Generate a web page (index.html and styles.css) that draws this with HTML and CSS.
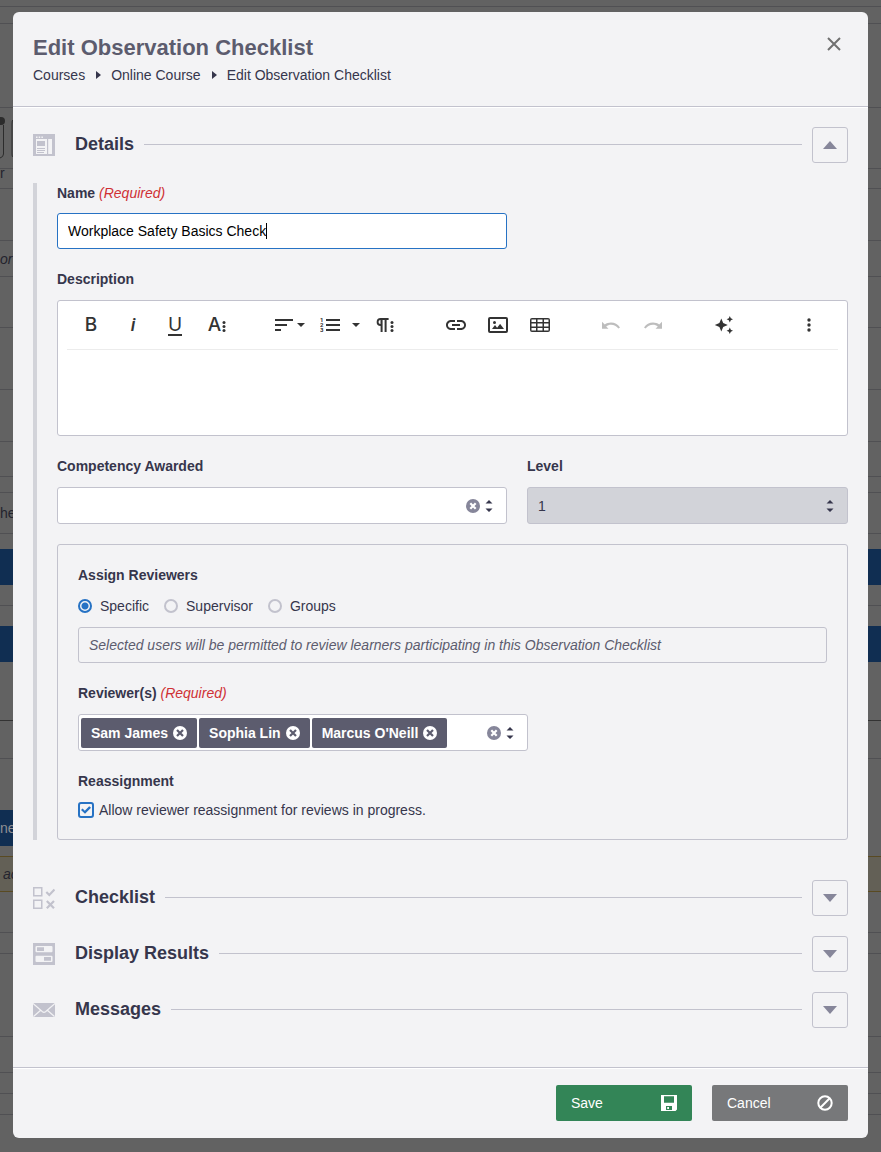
FILE: index.html
```html
<!DOCTYPE html>
<html lang="en">
<head>
  <meta charset="UTF-8">
  <meta name="viewport" content="width=device-width, initial-scale=1.0">
  <title>Edit Observation Checklist</title>
  <link rel="stylesheet" href="styles.css">
</head>
<body>
  <!-- Page behind the dialog -->
  <div class="page" aria-hidden="true">
    <div></div>
    <div></div>
    <div></div>
    <div>
      <svg width="13" height="44" viewBox="0 0 13 44" fill="none" stroke="#2c2c2c"><circle cx="1" cy="5" r="4" fill="#2c2c2c" stroke="none"/><path d="M3.500 9v29q0 3-3.500 4M13 4q-1 0-1 4v30q0 3 1 3"/></svg>
    </div>
    <div class="page-cut">r</div>
    <div></div>
    <div class="page-note">or</div>
    <div></div>
    <div></div>
    <div></div>
    <div></div>
    <div></div>
    <div>he</div>
    <div class="plain"></div>
    <div class="bar"></div>
    <div></div>
    <div class="plain"></div>
    <div class="bar"></div>
    <div class="strong"></div>
    <div></div>
    <div class="plain"></div>
    <div class="bar bar-short">ne</div>
    <div class="warn-line"></div>
    <div class="warn">ac</div>
    <div></div>
    <div></div>
    <div></div>
    <div></div>
    <div></div>
    <div></div>
    <div class="plain"></div>
  </div>

  <div class="overlay">
    <form class="modal" role="dialog" aria-labelledby="modal-title">
      <header class="modal-header">
        <div>
          <h1 id="modal-title">Edit Observation Checklist</h1>
          <nav class="breadcrumb">
            <a href="#">Courses</a>
            <a href="#">Online Course</a>
            <a href="#">Edit Observation Checklist</a>
          </nav>
        </div>
        <button type="button" class="close" aria-label="Close">
          <svg width="14" height="14" viewBox="0 0 14 14"><path d="M1 1l12 12M13 1L1 13" fill="none" stroke="#707070" stroke-width="2"/></svg>
        </button>
      </header>

      <main class="modal-body">
        <section>
          <div class="section-head">
            <svg class="section-icon" width="22" height="22" viewBox="0 0 22 22">
              <path fill="#c2c2cd" d="M0 0h22v22H0z"/>
              <path fill="#f3f3f5" d="M3 2.500h1.500V4H3zM5.700 2.500h1.500V4H5.700zM8.400 2.500h1.500V4H8.400zM3 5h11v15H3zM15.200 5H19v15h-3.800z"/>
              <path fill="#c2c2cd" d="M4 7h8v5H4zM4 14h8v1H4zM4 16h8v1H4zM4 18h7v1H4z"/>
            </svg>
            <h2>Details</h2>
            <hr>
            <button type="button" class="toggle" aria-label="Collapse Details" aria-expanded="true">
              <svg width="14" height="8" viewBox="0 0 14 8"><path d="M7 0l7 8H0z" fill="#86869a"/></svg>
            </button>
          </div>

          <div class="section-body">
            <div class="field field-name">
              <label for="name">Name <em>(Required)</em></label>
              <div class="text-box">
                <input type="text" id="name" value="Workplace Safety Basics Check">
                <span class="caret"></span>
              </div>
            </div>

            <div class="field">
              <label for="description">Description</label>
              <div class="editor">
                <div class="toolbar">
                  <div class="tool-group">
                    <button type="button" class="letter" aria-label="Bold"><b>B</b></button>
                    <button type="button" class="letter" aria-label="Italic"><i>i</i></button>
                    <button type="button" class="letter" aria-label="Underline"><u>U</u></button>
                    <button type="button" class="letter" aria-label="More text">A
                      <svg width="4" height="24" viewBox="0 0 4 24"><circle cx="2" cy="9.500" r="1.500"/><circle cx="2" cy="13.500" r="1.500"/><circle cx="2" cy="17.500" r="1.500"/></svg>
                    </button>
                  </div>
                  <div class="tool-group">
                    <button type="button" class="tool-align" aria-label="Align">
                      <svg width="32" height="24" viewBox="0 0 32 24"><path d="M2 6h18v2H2zM2 11h12v2H2zM2 16h6v2H2zM24 10h8l-4 4z"/></svg>
                    </button>
                    <button type="button" class="tool-list" aria-label="Ordered list">
                      <svg width="42" height="24" viewBox="0 0 42 24">
                        <path d="M6 6h14v2H6zM6 11h14v2H6zM6 16h14v2H6zM32 10h8l-4 4z"/>
                        <text x="0" y="9">1</text><text x="0" y="14">2</text><text x="0" y="19">3</text>
                      </svg>
                    </button>
                    <button type="button" aria-label="More paragraph">
                      <svg width="24" height="24" viewBox="0 0 24 24">
                        <path d="M7.700 5a4 4 0 0 0-.1 8v6h2V7h2v12h2V7h2V5zM5.500 9a2 2 0 0 1 2-2v4a2 2 0 0 1-2-2z"/>
                        <circle cx="19" cy="9.500" r="1.500"/><circle cx="19" cy="13.500" r="1.500"/><circle cx="19" cy="17.500" r="1.500"/>
                      </svg>
                    </button>
                  </div>
                  <div class="tool-group">
                    <button type="button" aria-label="Insert link">
                      <svg width="24" height="24" viewBox="0 0 24 24"><path d="M3.900 12c0-1.710 1.390-3.100 3.100-3.100h4V7H7c-2.760 0-5 2.240-5 5s2.240 5 5 5h4v-1.900H7c-1.710 0-3.100-1.390-3.100-3.100zM8 13h8v-2H8v2zm9-6h-4v1.900h4c1.710 0 3.100 1.390 3.100 3.100s-1.390 3.100-3.100 3.100h-4V17h4c2.760 0 5-2.240 5-5s-2.240-5-5-5z"/></svg>
                    </button>
                    <button type="button" aria-label="Insert image">
                      <svg width="24" height="24" viewBox="0 0 24 24"><path d="M14.200 11l3.800 5H6l3-3.900 2.100 2.700L14 11zM8.500 11a1.500 1.500 0 1 0 0-3 1.500 1.500 0 0 0 0 3zM22 6v12a2 2 0 0 1-2 2H4a2 2 0 0 1-2-2V6a2 2 0 0 1 2-2h16a2 2 0 0 1 2 2zm-2 0H4v12h16z"/></svg>
                    </button>
                    <button type="button" aria-label="Insert table">
                      <svg width="24" height="24" viewBox="0 0 24 24"><path fill-rule="evenodd" d="M4 5h16a2 2 0 0 1 2 2v10a2 2 0 0 1-2 2H4a2 2 0 0 1-2-2V7a2 2 0 0 1 2-2zM3.500 6.500V9H8V6.500zM9.500 6.500V9h5V6.500zM16 6.500V9h4.500V6.500zM3.500 10.500v3H8v-3zM9.500 10.500v3h5v-3zM16 10.500v3h4.500v-3zM3.500 15v2.500H8V15zM9.500 15v2.500h5V15zM16 15v2.500h4.500V15z"/></svg>
                    </button>
                  </div>
                  <div class="tool-group">
                    <button type="button" aria-label="Undo" disabled>
                      <svg width="24" height="24" viewBox="0 0 24 24"><path d="M3 8.700v7h6.500l-2.300-2.300c1.400-1 3-1.600 4.800-1.600 3 0 5.600 1.400 7.400 3.800l1.600-1.200c-2.200-3-5.300-4.800-9-4.800-2.300 0-4.500.700-6.200 1.900z"/></svg>
                    </button>
                    <button type="button" aria-label="Redo" disabled>
                      <svg width="24" height="24" viewBox="0 0 24 24"><path d="M21 8.700v7h-6.500l2.300-2.300c-1.400-1-3-1.600-4.800-1.600-3 0-5.600 1.400-7.400 3.800L3 14.400c2.200-3 5.300-4.800 9-4.800 2.300 0 4.500.700 6.200 1.900z"/></svg>
                    </button>
                  </div>
                  <div class="tool-group">
                    <button type="button" aria-label="AI assistant">
                      <svg width="24" height="24" viewBox="0 0 24 24"><path d="M9.300 5.500l1.900 4.600 4.600 1.900-4.600 1.900-1.900 4.600-1.900-4.600L2.800 12l4.600-1.900zM17.800 3l1 2.200 2.200 1-2.200 1-1 2.200-1-2.200-2.200-1 2.200-1zM17.800 14.600l1 2.200 2.200 1-2.200 1-1 2.200-1-2.200-2.200-1 2.200-1z"/></svg>
                    </button>
                  </div>
                  <div class="tool-group tool-last">
                    <button type="button" aria-label="More">
                      <svg width="24" height="24" viewBox="0 0 24 24"><circle cx="12" cy="7" r="1.700"/><circle cx="12" cy="12" r="1.700"/><circle cx="12" cy="17" r="1.700"/></svg>
                    </button>
                  </div>
                </div>
                <textarea id="description"></textarea>
              </div>
            </div>

            <div class="columns">
              <div class="field">
                <label for="competency">Competency Awarded</label>
                <div class="select-box">
                  <select id="competency"><option></option></select>
                  <div class="select-icons">
                    <button type="button" class="clear" aria-label="Clear competency">
                      <svg width="14" height="14" viewBox="0 0 14 14"><circle cx="7" cy="7" r="7" fill="#86869a"/><path d="M4.300 4.300l5.400 5.400M9.700 4.300L4.300 9.700" stroke="#fff" stroke-width="2.200"/></svg>
                    </button>
                    <svg width="8" height="12" viewBox="0 0 8 12"><path d="M4 0l3.500 3.500h-7zM4 12l3.500-3.500h-7z" fill="#36364c"/></svg>
                  </div>
                </div>
              </div>
              <div class="field">
                <label for="level">Level</label>
                <div class="select-box">
                  <select id="level" disabled><option>1</option></select>
                  <div class="select-icons">
                    <svg width="8" height="12" viewBox="0 0 8 12"><path d="M4 0l3.500 3.500h-7zM4 12l3.500-3.500h-7z" fill="#36364c"/></svg>
                  </div>
                </div>
              </div>
            </div>

            <div class="reviewers">
              <fieldset>
                <legend>Assign Reviewers</legend>
                <div class="radios">
                  <label><input type="radio" name="assign" checked>Specific</label>
                  <label><input type="radio" name="assign">Supervisor</label>
                  <label><input type="radio" name="assign">Groups</label>
                </div>
                <p class="info">Selected users will be permitted to review learners participating in this Observation Checklist</p>
              </fieldset>

              <div class="field">
                <label for="reviewer-search">Reviewer(s) <em>(Required)</em></label>
                <div class="token-box">
                  <span class="token">Sam James
                    <button type="button" aria-label="Remove Sam James"><svg width="14" height="14" viewBox="0 0 14 14"><circle cx="7" cy="7" r="7" fill="#fff"/><path d="M4 4l6 6M10 4l-6 6" stroke="#5c5c6e" stroke-width="2.200"/></svg></button>
                  </span>
                  <span class="token">Sophia Lin
                    <button type="button" aria-label="Remove Sophia Lin"><svg width="14" height="14" viewBox="0 0 14 14"><circle cx="7" cy="7" r="7" fill="#fff"/><path d="M4 4l6 6M10 4l-6 6" stroke="#5c5c6e" stroke-width="2.200"/></svg></button>
                  </span>
                  <span class="token">Marcus O'Neill
                    <button type="button" aria-label="Remove Marcus O'Neill"><svg width="14" height="14" viewBox="0 0 14 14"><circle cx="7" cy="7" r="7" fill="#fff"/><path d="M4 4l6 6M10 4l-6 6" stroke="#5c5c6e" stroke-width="2.200"/></svg></button>
                  </span>
                  <input type="text" id="reviewer-search">
                  <div class="select-icons">
                    <button type="button" class="clear" aria-label="Clear reviewers">
                      <svg width="14" height="14" viewBox="0 0 14 14"><circle cx="7" cy="7" r="7" fill="#86869a"/><path d="M4.300 4.300l5.400 5.400M9.700 4.300L4.300 9.700" stroke="#fff" stroke-width="2.200"/></svg>
                    </button>
                    <svg width="8" height="12" viewBox="0 0 8 12"><path d="M4 0l3.500 3.500h-7zM4 12l3.500-3.500h-7z" fill="#36364c"/></svg>
                  </div>
                </div>
              </div>

              <fieldset>
                <legend>Reassignment</legend>
                <label class="check"><input type="checkbox" checked>Allow reviewer reassignment for reviews in progress.</label>
              </fieldset>
            </div>
          </div>
        </section>

        <section class="section-head">
          <svg class="section-icon" width="22" height="22" viewBox="0 0 22 22" fill="none" stroke="#c2c2cd">
            <path stroke-width="1.500" d="M.75.75h8v8h-8zM.75 13.250h8v8h-8z"/>
            <path stroke-width="2.200" d="M13.300 5l3 3 5.200-5.500M13.800 14l7.200 7.200M21 14l-7.200 7.200"/>
          </svg>
          <h2>Checklist</h2>
          <hr>
          <button type="button" class="toggle" aria-label="Expand Checklist" aria-expanded="false">
            <svg width="14" height="8" viewBox="0 0 14 8"><path d="M0 0h14L7 8z" fill="#86869a"/></svg>
          </button>
        </section>

        <section class="section-head">
          <svg class="section-icon" width="22" height="22" viewBox="0 0 22 22">
            <path fill="#c2c2cd" d="M0 0h22v22H0z"/>
            <rect x="2.500" y="3" width="17" height="6.300" rx="1" fill="#f3f3f5"/>
            <rect x="2.500" y="12.700" width="17" height="6.300" rx="1" fill="#f3f3f5"/>
            <path fill="#c2c2cd" d="M4 4.300h7v3.700H4zM11 14h7v3.700h-7z"/>
          </svg>
          <h2>Display Results</h2>
          <hr>
          <button type="button" class="toggle" aria-label="Expand Display Results" aria-expanded="false">
            <svg width="14" height="8" viewBox="0 0 14 8"><path d="M0 0h14L7 8z" fill="#86869a"/></svg>
          </button>
        </section>

        <section class="section-head">
          <svg class="section-icon" width="22" height="22" viewBox="0 0 22 22">
            <rect y="4" width="22" height="14" rx="1" fill="#c2c2cd"/>
            <path d="M0 4.500l9.500 8.300q1.500 1.200 3 0L22 4.500M.5 17.500l7.200-6.300M21.500 17.500l-7.200-6.300" fill="none" stroke="#f3f3f5" stroke-width="1.200"/>
          </svg>
          <h2>Messages</h2>
          <hr>
          <button type="button" class="toggle" aria-label="Expand Messages" aria-expanded="false">
            <svg width="14" height="8" viewBox="0 0 14 8"><path d="M0 0h14L7 8z" fill="#86869a"/></svg>
          </button>
        </section>
      </main>

      <footer class="modal-footer">
        <button type="button" class="btn btn-save">Save
          <svg width="16" height="16" viewBox="0 0 16 16"><path fill="#fff" fill-rule="evenodd" d="M0 0h16v14.500L14.500 16H0zM3 1.200v6.600h10V1.200zM5 11v4h6v-4zM6.200 12v2H8v-2z"/></svg>
        </button>
        <button type="button" class="btn btn-cancel">Cancel
          <svg width="16" height="16" viewBox="0 0 16 16"><g fill="none" stroke="#fff" stroke-width="2"><circle cx="8" cy="8" r="6.700"/><path d="M3.300 12.700l9.400-9.400"/></g></svg>
        </button>
      </footer>
    </form>
  </div>
</body>
</html>
```

FILE: styles.css
```css
* {
  box-sizing: border-box;
}
body {
  margin: 0;
  position: relative;
  background: #626262;
  color: #36364c;
  font-family: "Liberation Sans", Arial, sans-serif;
  font-size: 14px;
  line-height: 20px;
}
button,
input,
select,
textarea {
  font: inherit;
  color: inherit;
}
button {
  display: flex;
  align-items: center;
  justify-content: center;
  padding: 0;
  border: 0;
  background: none;
  cursor: pointer;
}
svg {
  display: block;
  flex: none;
}

/* Dimmed page behind the dialog */
.page {
  position: absolute;
  inset: 0;
  overflow: hidden;
  display: grid;
  align-content: start;
  grid-template-rows:
    7px 17px 84px 61px 20px 52px 36px 51px 62px 52px 35px 16px 41px
    15px 36px 21px 20px 36px 59px 38px 51px 36px 11px 35px
    41px 21px 83px 36px 21px 21px 36px;
  color: #24242e;
}
.page > div {
  display: flex;
  align-items: center;
  border-bottom: 1px solid #505053;
  overflow: hidden;
}
.page > .plain {
  border: 0;
}
.page > .strong {
  border-color: #333;
}
.page > .bar {
  border: 0;
  background: #102e52;
  color: #8e8e92;
}
.page > .bar-short {
  width: 50%;
}
.page > .warn-line,
.page > .warn {
  border-color: #594a22;
}
.page > .warn {
  padding-left: 3px;
  background: #636056;
  font-style: italic;
}
.page-note {
  font-style: italic;
}
.page > .page-cut {
  align-items: flex-start;
  line-height: 8px;
}

/* Dialog */
.overlay {
  position: relative;
  padding: 12px 13px 14px;
}
.modal {
  background: #f3f3f5;
  border-radius: 6px;
}
.modal-header {
  display: flex;
  justify-content: space-between;
  align-items: flex-start;
  padding: 20px 20px 21px;
  border-bottom: 1px solid #c2c2cd;
}
h1 {
  margin: 0 0 4px;
  padding-top: 2px;
  font-size: 22px;
  line-height: 27px;
  color: #5c5c6e;
}
.breadcrumb {
  display: flex;
}
.breadcrumb a {
  display: flex;
  align-items: center;
  color: inherit;
  text-decoration: none;
}
.breadcrumb a + a::before {
  content: "";
  margin: 0 10px 0 11px;
  border: 4px solid transparent;
  border-left: 5px solid #36364c;
  border-right: 0;
}
.close {
  width: 28px;
  height: 24px;
}
.modal-body {
  display: flex;
  flex-direction: column;
  gap: 20px;
  padding: 19px 20px 39px;
  border-top: 1px solid #fff;
}
.section-head {
  display: flex;
  align-items: center;
}
.section-icon {
  margin-right: 20px;
}
h2 {
  margin: 0;
  font-size: 18px;
  line-height: 20px;
  padding-bottom: 2px;
}
hr {
  flex: 1;
  margin: 0 10px 1px;
  border: 0;
  border-top: 1px solid #c2c2cd;
}
.toggle {
  width: 36px;
  height: 36px;
  border: 1px solid #c2c2cd;
  border-radius: 3px;
}
.section-body {
  display: flex;
  flex-direction: column;
  gap: 20px;
  margin: 20px 0;
  padding-left: 20px;
  border-left: 4px solid #d2d3d9;
}

/* Fields */
.field {
  display: flex;
  flex-direction: column;
  gap: 11px;
}
.field > label,
legend {
  padding: 0;
  font-weight: bold;
}
.field em {
  font-weight: normal;
  color: #cf3034;
}
.field-name {
  gap: 10px;
}
.text-box {
  position: relative;
  max-width: 450px;
}
.text-box input {
  display: block;
  width: 100%;
  height: 36px;
  padding: 0 10px;
  border: 1px solid #2672c4;
  border-radius: 3px;
  background: #fff;
  color: #000;
  outline: 0;
}
.caret {
  position: absolute;
  top: 10px;
  left: 209px;
  width: 1px;
  height: 16px;
  background: #000;
}
.editor {
  border: 1px solid #c2c2cd;
  border-radius: 3px;
  background: #fff;
}
.toolbar {
  display: flex;
  gap: 33px;
  margin: 0 9px;
  padding: 5px 10px 5px 5px;
  border-bottom: 1px solid #ececec;
}
.tool-group {
  display: flex;
  gap: 4px;
}
.tool-group button {
  width: 38px;
  height: 38px;
  color: #333;
}
.tool-group svg {
  fill: #333;
}
.tool-group text {
  font-family: Roboto, sans-serif;
  font-size: 6px;
  font-weight: bold;
}
.tool-group .letter {
  gap: 1px;
  font-family: Inter, sans-serif;
  font-size: 19px;
  font-weight: 500;
}
.letter b {
  font-weight: 500;
}
.letter i {
  font-family: Roboto, sans-serif;
}
.letter u {
  width: 14px;
  height: 19px;
  margin-top: 3px;
  line-height: 16px;
  border-bottom: 2px solid #333;
  font-weight: 400;
  text-decoration: none;
}
.tool-group .tool-align {
  width: 40px;
}
.tool-group .tool-list {
  width: 49px;
  padding-left: 6px;
}
.tool-group button:disabled svg {
  fill: #bdbdbd;
}
.tool-last {
  margin-left: auto;
}
textarea {
  display: block;
  width: 100%;
  height: 85px;
  padding: 10px;
  border: 0;
  background: none;
  resize: none;
}
.columns {
  display: grid;
  grid-template-columns: 450px 1fr;
  gap: 20px;
}
.select-box {
  position: relative;
}
select {
  display: block;
  appearance: none;
  width: 100%;
  height: 37px;
  padding: 0 10px;
  border: 1px solid #c2c2cd;
  border-radius: 3px;
  background: #fff;
}
select:disabled {
  background: #d2d3d9;
  opacity: 1;
}
.select-icons {
  display: flex;
  align-items: center;
  gap: 5px;
}
.select-box .select-icons {
  position: absolute;
  top: 0;
  right: 14px;
  height: 100%;
}

/* Reviewers */
.reviewers {
  display: flex;
  flex-direction: column;
  gap: 20px;
  padding: 20px;
  border: 1px solid #c2c2cd;
  border-radius: 3px;
}
fieldset {
  margin: 0;
  padding: 0;
  border: 0;
}
.radios {
  display: flex;
  gap: 15px;
  margin: 11px 0;
}
.radios label {
  display: flex;
  align-items: center;
  gap: 8px;
}
.radios input {
  appearance: none;
  width: 14px;
  height: 14px;
  margin: 0;
  border: 2px solid #c2c2cd;
  border-radius: 50%;
}
.radios input:checked {
  border-color: #2672c4;
  background: radial-gradient(circle, #2672c4 3px, transparent 4px);
}
.info {
  margin: 0;
  padding: 7px 10px;
  border: 1px solid #c2c2cd;
  border-radius: 3px;
  color: #5c5c6e;
  font-style: italic;
}
.token-box {
  display: flex;
  align-items: center;
  gap: 2px;
  max-width: 450px;
  height: 37px;
  padding: 0 13px 0 2px;
  border: 1px solid #c2c2cd;
  border-radius: 3px;
  background: #fff;
}
.token {
  display: flex;
  align-items: center;
  gap: 5px;
  height: 30px;
  padding: 0 10px;
  border-radius: 2px;
  background: #5c5c6e;
  color: #fff;
  font-weight: bold;
}
.token-box input {
  flex: 1;
  min-width: 0;
  padding: 0;
  border: 0;
  background: none;
  outline: 0;
}
.check {
  display: flex;
  align-items: center;
  gap: 5px;
  margin-top: 10px;
  line-height: 18px;
}
.check input {
  appearance: none;
  display: grid;
  place-content: center;
  width: 16px;
  height: 16px;
  margin: 0;
  border: 2px solid #2672c4;
  border-radius: 3px;
}
.check input:checked::before {
  content: "";
  width: 10px;
  height: 8px;
  background: #2672c4;
  clip-path: polygon(0 50%, 16% 32%, 38% 58%, 82% 4%, 100% 22%, 40% 96%);
}

/* Footer */
.modal-footer {
  display: flex;
  justify-content: flex-end;
  gap: 20px;
  padding: 17px 20px;
  border-top: 1px solid #c2c2cd;
  box-shadow: inset 0 1px #fff;
}
.btn {
  justify-content: space-between;
  width: 136px;
  height: 36px;
  padding: 0 15px;
  border-radius: 2px;
  color: #fff;
}
.btn-save {
  background: #338557;
}
.btn-cancel {
  background: #77787a;
}
```
